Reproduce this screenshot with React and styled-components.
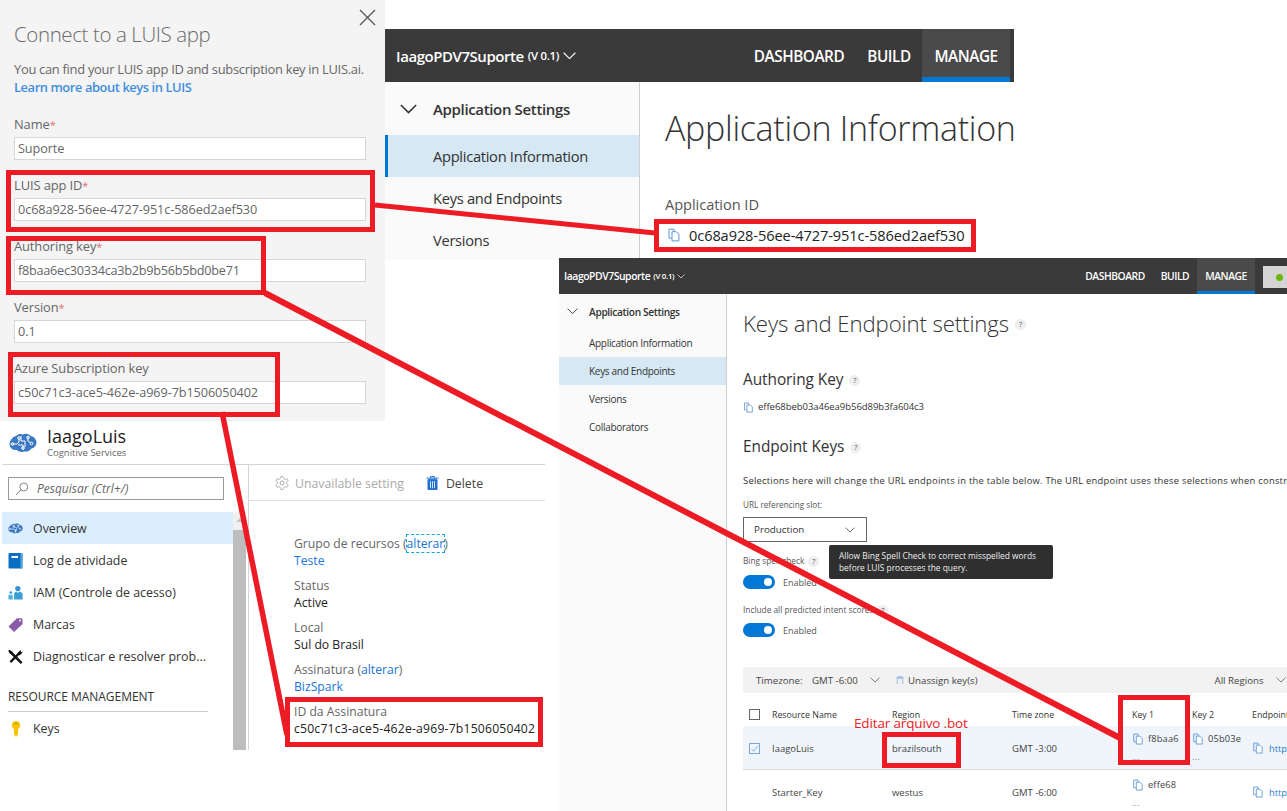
import React from "react";
import styled, { createGlobalStyle } from "styled-components";

const Global = createGlobalStyle`
  html, body { margin: 0; padding: 0; background: #fff; }
  body { font-family: "Open Sans", "Noto Sans", "Liberation Sans", sans-serif; overflow: hidden; }
  * { box-sizing: border-box; }
`;

const Canvas = styled.div`
  position: relative;
  width: 1287px;
  height: 811px;
  overflow: hidden;
  background: #fff;
`;

const Window = styled.section`
  position: absolute;
  left: ${(p) => p.$x}px;
  top: ${(p) => p.$y}px;
  width: ${(p) => p.$w}px;
  height: ${(p) => p.$h}px;
  background: ${(p) => p.$bg || "#fff"};
  overflow: ${(p) => (p.$clip ? "hidden" : "visible")};
`;

/* ---------- Connect panel ---------- */
const ConnectInner = styled.div`
  padding: 22px 19px 0 14px;
  color: #666;
`;
const CloseBtn = styled.svg`
  position: absolute;
  left: 359px;
  top: 9px;
  width: 17px;
  height: 17px;
`;
const ConnectTitle = styled.h1`
  margin: 0;
  font-size: 20.5px;
  line-height: 24px;
  font-weight: 300;
  color: #6b6b6b;
  letter-spacing: -0.4px;
`;
const ConnectDesc = styled.p`
  margin: 14px 0 0;
  font-size: 12.9px;
  line-height: 18px;
  color: #666;
  letter-spacing: -0.28px;
  white-space: nowrap;
`;
const LearnLink = styled.span`
  display: block;
  color: #3f8fe0;
  font-weight: 600;
  letter-spacing: -0.42px;
`;
const Form = styled.div`
  margin-top: 16px;
  display: flex;
  flex-direction: column;
`;
const Field = styled.div`
  height: 61px;
`;
const FieldLabel = styled.div`
  font-size: 12.9px;
  line-height: 24px;
  height: 25px;
  color: #666;
  letter-spacing: -0.1px;
`;
const Req = styled.span`
  color: #d9736f;
  font-size: 11px;
`;
const FieldInput = styled.div`
  width: 352px;
  height: 23px;
  background: #fff;
  border: 1px solid #d6d6d6;
  font-size: 12.7px;
  line-height: 21px;
  padding-left: 3px;
  color: #666;
  letter-spacing: ${(p) => p.$ls ?? -0.1}px;
`;

/* ---------- LUIS shared ---------- */
const TopBar = styled.header`
  height: ${(p) => p.$h}px;
  background: #3a3a3a;
  color: #fff;
  display: flex;
  align-items: stretch;
  white-space: nowrap;
`;
const AppName = styled.div`
  display: flex;
  align-items: center;
  padding-left: ${(p) => p.$pad}px;
  font-size: ${(p) => p.$size}px;
  font-weight: 600;
  letter-spacing: -0.45px;
  gap: ${(p) => p.$gap}px;
  flex: 1;
  small {
    font-size: ${(p) => p.$size * 0.76}px;
    font-weight: 600;
    letter-spacing: -0.3px;
  }
`;
const TopTab = styled.div`
  display: flex;
  align-items: center;
  justify-content: center;
  width: ${(p) => p.$w}px;
  font-size: ${(p) => p.$size}px;
  font-weight: 600;
  letter-spacing: -0.45px;
  background: ${(p) => (p.$active ? "#4a4a4a" : "transparent")};
  border-bottom: ${(p) => (p.$active ? `${p.$line}px solid #0078d7` : "none")};
  padding-top: ${(p) => (p.$active ? p.$line : 0)}px;
`;
const Chevron = ({ size = 12, color = "#fff", width = 1 }) => (
  <svg width={size} height={size * 0.6} viewBox="0 0 12 7" fill="none" style={{ flex: "none" }}>
    <path d="M.6.6 6 6 11.4.6" stroke={color} strokeWidth={width} />
  </svg>
);
const SideNav = styled.nav`
  flex: none;
  width: ${(p) => p.$w}px;
  background: #fafafa;
  border-right: 1px solid #cfcfcf;
  color: #333;
`;
const NavHead = styled.div`
  display: flex;
  align-items: center;
  height: ${(p) => p.$h}px;
  padding-left: ${(p) => p.$chev}px;
  padding-top: ${(p) => p.$pt || 0}px;
  gap: ${(p) => p.$gap}px;
  font-size: ${(p) => p.$size}px;
  font-weight: 600;
  color: #333;
  letter-spacing: -0.35px;
`;
const NavItem = styled.div`
  display: flex;
  align-items: center;
  height: ${(p) => p.$h}px;
  padding-left: ${(p) => p.$pad}px;
  font-size: ${(p) => p.$size}px;
  letter-spacing: -0.3px;
  white-space: nowrap;
  background: ${(p) => (p.$active ? "#d5e8f4" : "transparent")};
  box-shadow: ${(p) => (p.$bar ? "inset 3px 0 0 #0078d7" : "none")};
`;
const Body = styled.div`
  display: flex;
  height: ${(p) => p.$h}px;
`;
const CopyGlyph = ({ size = 14 }) => (
  <svg width={size} height={size} viewBox="0 0 14 14" fill="none" style={{ flex: "none" }}>
    <path d="M2 1.2h5l0 2.3M2 1.2v9h2.6" stroke="#5b93d6" strokeWidth="1" />
    <path d="M5 3.7h4.3l2.6 2.6v6.6H5z" stroke="#5b93d6" strokeWidth="1" fill="#fff" />
  </svg>
);

/* ---------- Manage window ---------- */
const ManageContent = styled.div`
  padding: 24px 0 0 25px;
  color: #333;
  white-space: nowrap;
  flex: 1;
`;
const BigHeading = styled.h2`
  margin: 0;
  font-size: 34px;
  line-height: 44px;
  font-weight: 300;
  color: #333;
  letter-spacing: -0.3px;
`;
const IdLabel = styled.div`
  margin-top: 44px;
  font-size: 14.6px;
  line-height: 20px;
  color: #555;
  letter-spacing: -0.05px;
`;
const IdValue = styled.div`
  margin-top: 11px;
  display: flex;
  align-items: center;
  gap: 8px;
  font-size: 14.6px;
  line-height: 20px;
  color: #222;
  padding-left: 2px;
  letter-spacing: -0.1px;
`;

/* ---------- Keys window ---------- */
const StatusPill = styled.div`
  flex: none;
  width: 24px;
  margin: 8px 0 6px 8px;
  background: #d4d4d4;
  display: flex;
  align-items: center;
  padding-left: 13px;
  &::before {
    content: "";
    flex: none;
    width: 7px;
    height: 7px;
    border-radius: 50%;
    background: #6cb80a;
  }
`;
const KeysMain = styled.div`
  flex: 1;
  min-width: 0;
  padding: 15px 0 0 16px;
  color: #333;
  white-space: nowrap;
`;
const KeysHeading = styled.h2`
  margin: 0;
  font-size: 22.2px;
  line-height: 30px;
  font-weight: 300;
  display: flex;
  align-items: center;
  gap: 6px;
  letter-spacing: -0.1px;
`;
const Help = styled.span`
  display: inline-flex;
  align-items: center;
  justify-content: center;
  width: 11px;
  height: 11px;
  border-radius: 50%;
  background: #eee;
  font-size: 7.5px;
  font-weight: 400;
  color: #555;
  letter-spacing: 0;
  flex: none;
`;
const SubHeading = styled.h3`
  margin: ${(p) => p.$mt}px 0 0;
  font-size: 15.4px;
  line-height: 20px;
  font-weight: 400;
  color: #333;
  display: flex;
  align-items: center;
  gap: 6px;
  letter-spacing: -0.05px;
`;
const AuthKey = styled.div`
  margin-top: 10px;
  display: flex;
  align-items: center;
  gap: 4px;
  font-size: 9.5px;
  line-height: 14px;
  color: #333;
  letter-spacing: -0.04px;
`;
const Small = styled.div`
  margin-top: ${(p) => p.$mt}px;
  font-size: ${(p) => p.$size || 9}px;
  line-height: 14px;
  color: ${(p) => p.$color || "#555"};
  letter-spacing: ${(p) => p.$ls ?? 0}px;
  display: flex;
  align-items: center;
  gap: 4px;
`;
const SelectBox = styled.div`
  margin-top: 5px;
  width: 124px;
  height: 25px;
  border: 1px solid #666;
  display: flex;
  align-items: center;
  justify-content: space-between;
  padding: 0 11px 0 10px;
  font-size: 9.8px;
  color: #333;
  background: #fff;
`;
const Tooltip = styled.div`
  position: absolute;
  left: 270px;
  top: 287px;
  width: 224px;
  height: 34px;
  background: #2f2f2f;
  border-radius: 2px;
  color: #eee;
  font-size: 8.4px;
  line-height: 12px;
  padding: 5px 10px;
  white-space: nowrap;
`;
const ToggleRow = styled.div`
  margin-top: ${(p) => p.$mt}px;
  height: 14px;
  display: flex;
  align-items: center;
  gap: 8px;
  font-size: 9px;
  color: #555;
`;
const Toggle = styled.span`
  display: flex;
  align-items: center;
  justify-content: flex-end;
  width: 32px;
  height: 14px;
  border-radius: 7px;
  background: #0078d7;
  padding-right: 3px;
  &::after {
    content: "";
    width: 8px;
    height: 8px;
    border-radius: 50%;
    background: #fff;
  }
`;
const TableBar = styled.div`
  margin-top: 30px;
  height: 26px;
  background: #f2f2f2;
  display: flex;
  align-items: center;
  padding-left: 13px;
  font-size: 9.7px;
  color: #444;
  span { display: flex; align-items: center; flex: none; }
`;
const Grid = styled.div`
  display: grid;
  grid-template-columns: 29px 120px 120px 120px 60px 60px 1fr;
  height: ${(p) => p.$h}px;
  padding-top: ${(p) => p.$pt || 0}px;
  align-items: center;
  font-size: 9.5px;
  color: #444;
  background: ${(p) => p.$bg || "transparent"};
  border-bottom: ${(p) => (p.$line ? "1px solid #ddd" : "none")};
`;
const HeadCell = styled.div`
  font-weight: 400;
  color: #333;
  font-size: 8.8px;
`;
const Check = styled.span`
  display: flex;
  align-items: center;
  justify-content: center;
  margin-left: 6px;
  width: 11px;
  height: 11px;
  border: 1px solid ${(p) => (p.$checked ? "#7ba7db" : "#666")};
  background: ${(p) => (p.$checked ? "#f1f6fc" : "#fff")};
`;
const KeyCell = styled.div`
  font-size: 9.3px;
  line-height: 18px;
  color: #444;
  letter-spacing: 0.15px;
  padding-top: ${(p) => (p.$low ? 4 : 0)}px;
  div { display: flex; align-items: center; gap: 4px; }
`;
const Dots = styled.div`
  color: #888;
  line-height: 18px;
`;
const Endpoint = styled.div`
  display: flex;
  align-items: center;
  gap: 5px;
  color: #2b7cd3;
  font-size: 9.3px;
`;

/* ---------- Azure window ---------- */
const AzureHead = styled.header`
  height: 44px;
  display: flex;
  align-items: center;
  padding-left: 7px;
  gap: 10px;
  border-bottom: 1px solid #d5d5d5;
`;
const AzureTitle = styled.div`
  font-size: 18px;
  line-height: 18px;
  font-weight: 500;
  color: #222;
  small {
    display: block;
    margin-top: 2px;
    font-size: 9.5px;
    line-height: 12px;
    font-weight: 400;
    color: #666;
  }
`;
const AzureSide = styled.aside`
  flex: none;
  width: 247px;
  border-right: 1px solid #d5d5d5;
  padding-top: 12px;
`;
const SearchBox = styled.div`
  margin-left: 6px;
  width: 216px;
  height: 23px;
  border: 1px solid #9a9a9a;
  display: flex;
  align-items: center;
  gap: 8px;
  padding-left: 6px;
  font-size: 12px;
  font-style: italic;
  color: #666;
`;
const MenuWrap = styled.div`
  margin-top: 12px;
  display: flex;
  height: 238px;
`;
const Menu = styled.div`
  width: 231px;
`;
const ScrollBar = styled.div`
  width: 13px;
  background: #f0f0f0;
  display: flex;
  flex-direction: column;
  align-items: center;
  &::before {
    content: "";
    margin-top: 6px;
    border-left: 4px solid transparent;
    border-right: 4px solid transparent;
    border-bottom: 4px solid #c4c4c4;
  }
  &::after {
    content: "";
    margin-top: 8px;
    width: 100%;
    flex: 1;
    background: #bdbdbd;
  }
`;
const MenuItem = styled.div`
  height: 32px;
  display: flex;
  align-items: center;
  gap: 10px;
  padding: 1px 0 0 6px;
  font-size: 12.4px;
  color: #333;
  white-space: nowrap;
  background: ${(p) => (p.$active ? "#dbeefd" : "transparent")};
`;
const IconSlot = styled.span`
  width: 15px;
  height: 16px;
  display: flex;
  align-items: center;
  justify-content: center;
  flex: none;
`;
const MenuSection = styled.div`
  margin: 12px 25px 0 6px;
  height: 28px;
  line-height: 26px;
  font-size: 12px;
  color: #333;
  border-bottom: 1px solid #ccc;
  letter-spacing: -0.05px;
`;
const AzureMain = styled.main`
  flex: 1;
  white-space: nowrap;
`;
const AzureBar = styled.div`
  height: 36px;
  display: flex;
  align-items: center;
  padding: 1px 0 0 25px;
  gap: 5px;
  font-size: 12.3px;
  border-bottom: 1px solid #ddd;
`;
const BarBtn = styled.span`
  display: flex;
  align-items: center;
  gap: ${(p) => p.$gap || 5}px;
  color: ${(p) => (p.$off ? "#aaa" : "#444")};
  margin-right: ${(p) => p.$mr || 0}px;
`;
const Props = styled.div`
  padding: 34px 0 0 45px;
  display: flex;
  flex-direction: column;
  gap: 7px;
`;
const PropLabel = styled.div`
  font-size: 12.2px;
  line-height: 18px;
  color: #666;
`;
const PropValue = styled.div`
  margin-top: -1px;
  font-size: 12.2px;
  line-height: 18px;
  color: ${(p) => (p.$link ? "#1a73d9" : "#222")};
  letter-spacing: ${(p) => p.$ls || 0}px;
`;
const Link = styled.span`
  color: #1a73d9;
  outline: ${(p) => (p.$focus ? "1px dashed #0ea5d8" : "none")};
`;

/* ---------- Annotations ---------- */
const Annotations = styled.svg`
  position: absolute;
  left: 0;
  top: 0;
  width: 1287px;
  height: 811px;
  pointer-events: none;
`;
const RedNote = styled.div`
  position: absolute;
  left: 854px;
  top: 713px;
  font-size: 13.5px;
  line-height: 20px;
  color: #ed1c24;
  letter-spacing: -0.15px;
  white-space: nowrap;
`;

const RED = "#ed1c24";
const boxes = [
  [6, 170, 375, 232],
  [6, 236, 266, 295],
  [8, 352, 280, 417],
  [654, 219, 976, 252],
  [285, 697, 543, 747],
  [882, 732, 961, 768],
  [1118, 695, 1190, 765],
];
const lines = [
  [375, 205, 655, 233, 5],
  [265, 293, 1120, 738, 6],
  [222, 412, 287, 735, 5.5],
];

const fields = [
  ["Name", true, "Suporte"],
  ["LUIS app ID", true, "0c68a928-56ee-4727-951c-586ed2aef530"],
  ["Authoring key", true, "f8baa6ec30334ca3b2b9b56b5bd0be71", -0.26],
  ["Version", true, "0.1"],
  ["Azure Subscription key", false, "c50c71c3-ace5-462e-a969-7b1506050402"],
];

const BrainLogo = ({ w = 28, h = 20 }) => (
  <svg width={w} height={h} viewBox="0 0 28 20" style={{ flex: "none" }}>
    <path d="M7 3C9 .8 12 .5 14 1.5 16.5.3 20 .8 21.5 3c3 .3 5.500 2.600 6 6 .3 3.200-2 6-5 6.500-1.500 2.300-4.300 3.500-7 3-2.500 1-6 .4-7.600-1.500C4 17.600 1.300 15.500.7 12.500.1 8.500 3 4 7 3z" fill="#3a78c3" />
    <g stroke="#fff" strokeWidth="1" fill="none">
      <path d="M3 11h5l2-2V6M12 3v5h4v6M19 4v4l3 2M14 17v-5H9" />
      <circle cx="3.500" cy="11" r="1.300" />
      <circle cx="10" cy="5" r="1.300" />
      <circle cx="19" cy="4.500" r="1.300" />
      <circle cx="22.500" cy="10.500" r="1.300" />
      <circle cx="14" cy="15" r="1.300" />
    </g>
  </svg>
);
const BookIcon = () => (
  <svg width="15" height="16" viewBox="0 0 15 16">
    <rect x=".5" y="0" width="14" height="15.500" rx="1" fill="#0a6fc2" />
    <rect x="12.500" y="0" width="2" height="15.500" fill="#59a7e0" />
    <rect x="3.500" y="3" width="6.500" height="2" fill="#fff" />
  </svg>
);
const PeopleIcon = () => (
  <svg width="16" height="16" viewBox="0 0 16 16">
    <circle cx="10.500" cy="3.200" r="2.800" fill="#3a8fd0" />
    <path d="M6.500 15V8l2.500-1.500 1.500 1.500L12 6.500 15.500 8v7z" fill="#3aa0d8" />
    <circle cx="3" cy="7.500" r="1.500" fill="#3aa0d8" />
    <path d="M.5 15v-4.500l1.500-.8 1 1 1-1 1 .8V15z" fill="#4ab0e0" />
  </svg>
);
const TagIcon = () => (
  <svg width="16" height="16" viewBox="0 0 16 16">
    <path d="M9.500.8h4.500q1.500 0 1.500 1.500v4.500L6.500 15.500.5 9.500z" fill="#8a5aa8" />
    <circle cx="12.800" cy="3.200" r="1" fill="#fff" />
  </svg>
);
const ToolsIcon = () => (
  <svg width="16" height="16" viewBox="0 0 16 16" fill="none">
    <path d="M3 3l11.500 11.500" stroke="#111" strokeWidth="2.800" />
    <path d="M13 3L2.500 13.500" stroke="#111" strokeWidth="2.400" />
    <path d="M.3 1.500 1.500.3l3.200 2v2.400H2.300z" fill="#111" />
    <path d="M10.500 3.500 13.500.5l.4 2.100 1.800.4-3 3-2.700-.3z" fill="#111" />
  </svg>
);
const KeyIcon = () => (
  <svg width="12" height="16" viewBox="0 0 12 16">
    <path d="M6 0c2.400 0 4.200 1.900 4.200 4.300 0 1.600-.9 3-2.200 3.700v5.500L6 16l-2-2.500V8C2.700 7.300 1.800 5.900 1.800 4.300 1.800 1.900 3.600 0 6 0z" fill="#f6c700" />
    <rect x="4.300" y="2" width="3.400" height="1.200" fill="#b89500" />
  </svg>
);
const SearchIcon = () => (
  <svg width="14" height="14" viewBox="0 0 14 14" fill="none" stroke="#888" strokeWidth="1">
    <circle cx="8.800" cy="5" r="4" />
    <path d="M5.800 8L1 13" />
  </svg>
);
const GearIcon = () => (
  <svg width="16" height="16" viewBox="0 0 24 24" fill="none" stroke="#aaa" strokeWidth="1.500">
    <path d="M12.220 2h-.44a2 2 0 0 0-2 2v.18a2 2 0 0 1-1 1.730l-.43.250a2 2 0 0 1-2 0l-.15-.080a2 2 0 0 0-2.730.730l-.22.380a2 2 0 0 0 .730 2.730l.15.100a2 2 0 0 1 1 1.720v.510a2 2 0 0 1-1 1.740l-.15.090a2 2 0 0 0-.730 2.730l.22.380a2 2 0 0 0 2.730.730l.15-.080a2 2 0 0 1 2 0l.43.250a2 2 0 0 1 1 1.730V20a2 2 0 0 0 2 2h.44a2 2 0 0 0 2-2v-.18a2 2 0 0 1 1-1.730l.43-.250a2 2 0 0 1 2 0l.15.080a2 2 0 0 0 2.730-.730l.22-.390a2 2 0 0 0-.730-2.730l-.15-.080a2 2 0 0 1-1-1.740v-.5a2 2 0 0 1 1-1.740l.15-.090a2 2 0 0 0 .730-2.730l-.22-.380a2 2 0 0 0-2.730-.730l-.15.080a2 2 0 0 1-2 0l-.43-.250a2 2 0 0 1-1-1.730V4a2 2 0 0 0-2-2z" />
    <circle cx="12" cy="12" r="3" />
  </svg>
);
const TrashIcon = ({ size = 13, color = "#1f6fd0", fill = true }) => (
  <svg width={size} height={size * 1.1} viewBox="0 0 13 14" style={{ flex: "none" }}>
    <path d="M.5 2h12M4.500 2V.5h4V2" stroke={color} fill="none" strokeWidth="1" />
    <path d="M2 3.500h9v10H2z" fill={fill ? color : "none"} stroke={color} />
    {fill && <path d="M4.500 5v7M6.500 5v7M8.500 5v7" stroke="#fff" strokeWidth="0.8" />}
  </svg>
);
const CheckMark = () => (
  <svg width="9" height="9" viewBox="0 0 10 10" fill="none" stroke="#7ba7db" strokeWidth="1">
    <path d="M1.500 5.500 4 8l4.800-6" />
  </svg>
);

const keyCell = (v, low) => (
  <KeyCell $low={low}>
    <div><CopyGlyph size={12} />{v}</div>
    <Dots>...</Dots>
  </KeyCell>
);

export default function App() {
  return (
    <>
      <Global />
      <Canvas>
        <Window $x={385} $y={29} $w={629} $h={231}>
          <TopBar $h={53}>
            <AppName $pad={11} $size={15} $gap={4}>
              IaagoPDV7Suporte <small>(V 0.1)</small><Chevron size={13} />
            </AppName>
            <TopTab $w={114} $size={15.3}>DASHBOARD</TopTab>
            <TopTab $w={66} $size={15.3}>BUILD</TopTab>
            <TopTab $w={88} $size={15.3} $active $line={5}>MANAGE</TopTab>
            <TopTab $w={4} />
          </TopBar>
          <Body $h={178}>
            <SideNav $w={255}>
              <NavHead $h={53} $pt={1} $chev={15} $gap={16} $size={15}>
                <Chevron size={17} color="#333" width={1.1} />
                Application Settings
              </NavHead>
              <NavItem $h={42} $pad={48} $size={14.7} $active $bar>Application Information</NavItem>
              <NavItem $h={42} $pad={48} $size={14.7}>Keys and Endpoints</NavItem>
              <NavItem $h={42} $pad={48} $size={14.7}>Versions</NavItem>
            </SideNav>
            <ManageContent>
              <BigHeading>Application Information</BigHeading>
              <IdLabel>Application ID</IdLabel>
              <IdValue><CopyGlyph size={14} />0c68a928-56ee-4727-951c-586ed2aef530</IdValue>
            </ManageContent>
          </Body>
        </Window>

        <Window $x={0} $y={0} $w={385} $h={421} $bg="#f4f4f4">
          <CloseBtn viewBox="0 0 17 17" fill="none" stroke="#555" strokeWidth="1.3">
            <path d="M1 1l15 15M16 1 1 16" />
          </CloseBtn>
          <ConnectInner>
            <ConnectTitle>Connect to a LUIS app</ConnectTitle>
            <ConnectDesc>
              You can find your LUIS app ID and subscription key in LUIS.ai.
              <LearnLink>Learn more about keys in LUIS</LearnLink>
            </ConnectDesc>
            <Form>
              {fields.map(([label, req, value, ls]) => (
                <Field key={label}>
                  <FieldLabel>{label}{req && <Req>*</Req>}</FieldLabel>
                  <FieldInput $ls={ls}>{value}</FieldInput>
                </Field>
              ))}
            </Form>
          </ConnectInner>
        </Window>

        <Window $x={559} $y={258} $w={728} $h={553} $clip>
          <TopBar $h={36}>
            <AppName $pad={5} $size={10.4} $gap={3}>
              IaagoPDV7Suporte <small>(V 0.1)</small><Chevron size={8} />
            </AppName>
            <TopTab $w={76} $size={10.3}>DASHBOARD</TopTab>
            <TopTab $w={44} $size={10.3}>BUILD</TopTab>
            <TopTab $w={58} $size={10.3} $active $line={3}>MANAGE</TopTab>
            <StatusPill />
          </TopBar>
          <Body $h={517}>
            <SideNav $w={168}>
              <NavHead $h={35} $chev={8} $gap={11} $size={10.2}>
                <Chevron size={11} color="#333" />
                Application Settings
              </NavHead>
              <NavItem $h={28} $pad={30} $size={10}>Application Information</NavItem>
              <NavItem $h={28} $pad={30} $size={10} $active>Keys and Endpoints</NavItem>
              <NavItem $h={28} $pad={30} $size={10}>Versions</NavItem>
              <NavItem $h={28} $pad={30} $size={10}>Collaborators</NavItem>
            </SideNav>
            <KeysMain>
              <KeysHeading>Keys and Endpoint settings <Help>?</Help></KeysHeading>
              <SubHeading $mt={31}>Authoring Key <Help>?</Help></SubHeading>
              <AuthKey><CopyGlyph size={11} />effe68beb03a46ea9b56d89b3fa604c3</AuthKey>
              <SubHeading $mt={23}>Endpoint Keys <Help>?</Help></SubHeading>
              <Small $mt={17} $size={9.4} $color="#333" $ls={0.25}>Selections here will change the URL endpoints in the table below. The URL endpoint uses these selections when constructing the URL.</Small>
              <Small $mt={10} $size={8.2}>URL referencing slot:</Small>
              <SelectBox>Production <Chevron size={10} color="#555" /></SelectBox>
              <Small $mt={12} $size={8.3}>Bing spell check <Help>?</Help></Small>
              <ToggleRow $mt={7}><Toggle />Enabled</ToggleRow>
              <Small $mt={14} $size={8.3}>Include all predicted intent scores <Help>?</Help></Small>
              <ToggleRow $mt={6}><Toggle />Enabled</ToggleRow>
              <TableBar>
                <span style={{ width: 56 }}>Timezone:</span>
                <span style={{ width: 58 }}>GMT -6:00</span>
                <span style={{ width: 26 }}><Chevron size={10} color="#666" /></span>
                <span style={{ gap: 4 }}><TrashIcon size={8} color="#6a9fd8" fill={false} />Unassign key(s)</span>
                <span style={{ marginLeft: 237, gap: 12 }}>All Regions <Chevron size={10} color="#666" /></span>
              </TableBar>
              <Grid $h={33} $pt={10}>
                <Check />
                <HeadCell>Resource Name</HeadCell>
                <HeadCell>Region</HeadCell>
                <HeadCell>Time zone</HeadCell>
                <HeadCell>Key 1</HeadCell>
                <HeadCell>Key 2</HeadCell>
                <HeadCell>Endpoint</HeadCell>
              </Grid>
              <Grid $h={44} $pt={1} $bg="#eff5fb" $line>
                <Check $checked><CheckMark /></Check>
                <div>IaagoLuis</div>
                <div>brazilsouth</div>
                <div>GMT -3:00</div>
                {keyCell("f8baa6")}
                {keyCell("05b03e")}
                <Endpoint><CopyGlyph size={12} />http</Endpoint>
              </Grid>
              <Grid $h={44}>
                <span />
                <div>Starter_Key</div>
                <div>westus</div>
                <div>GMT -6:00</div>
                {keyCell("effe68", true)}
                <span />
                <Endpoint><CopyGlyph size={12} />http</Endpoint>
              </Grid>
            </KeysMain>
          </Body>
          <Tooltip>Allow Bing Spell Check to correct misspelled words<br />before LUIS processes the query.</Tooltip>
        </Window>

        <Window $x={2} $y={421} $w={543} $h={329}>
          <AzureHead>
            <BrainLogo />
            <AzureTitle>
              IaagoLuis
              <small>Cognitive Services</small>
            </AzureTitle>
          </AzureHead>
          <Body $h={285}>
            <AzureSide>
              <SearchBox><SearchIcon />Pesquisar (Ctrl+/)</SearchBox>
              <MenuWrap>
                <Menu>
                  <MenuItem $active><IconSlot><BrainLogo w={15} h={11} /></IconSlot>Overview</MenuItem>
                  <MenuItem><IconSlot><BookIcon /></IconSlot>Log de atividade</MenuItem>
                  <MenuItem><IconSlot><PeopleIcon /></IconSlot>IAM (Controle de acesso)</MenuItem>
                  <MenuItem><IconSlot><TagIcon /></IconSlot>Marcas</MenuItem>
                  <MenuItem><IconSlot><ToolsIcon /></IconSlot>Diagnosticar e resolver prob...</MenuItem>
                  <MenuSection>RESOURCE MANAGEMENT</MenuSection>
                  <MenuItem><IconSlot><KeyIcon /></IconSlot>Keys</MenuItem>
                </Menu>
                <ScrollBar />
              </MenuWrap>
            </AzureSide>
            <AzureMain>
              <AzureBar>
                <BarBtn $off $gap={5} $mr={17}><GearIcon />Unavailable setting</BarBtn>
                <BarBtn $gap={7}><TrashIcon />Delete</BarBtn>
              </AzureBar>
              <Props>
                <div>
                  <PropLabel>Grupo de recursos (<Link $focus>alterar</Link>)</PropLabel>
                  <PropValue $link>Teste</PropValue>
                </div>
                <div>
                  <PropLabel>Status</PropLabel>
                  <PropValue>Active</PropValue>
                </div>
                <div>
                  <PropLabel>Local</PropLabel>
                  <PropValue>Sul do Brasil</PropValue>
                </div>
                <div>
                  <PropLabel>Assinatura (<Link>alterar</Link>)</PropLabel>
                  <PropValue $link>BizSpark</PropValue>
                </div>
                <div>
                  <PropLabel>ID da Assinatura</PropLabel>
                  <PropValue $ls={0.2}>c50c71c3-ace5-462e-a969-7b1506050402</PropValue>
                </div>
              </Props>
            </AzureMain>
          </Body>
        </Window>

        <Annotations viewBox="0 0 1287 811" fill="none" stroke={RED}>
          {lines.map(([x1, y1, x2, y2, w]) => (
            <line key={`${x1}-${y1}`} x1={x1} y1={y1} x2={x2} y2={y2} strokeWidth={w} />
          ))}
          {boxes.map(([x1, y1, x2, y2]) => (
            <rect key={`${x1}-${y1}`} x={x1 + 2.5} y={y1 + 2.5} width={x2 - x1 - 5} height={y2 - y1 - 5} strokeWidth="5" />
          ))}
        </Annotations>
        <RedNote>Editar arquivo .bot</RedNote>
      </Canvas>
    </>
  );
}
